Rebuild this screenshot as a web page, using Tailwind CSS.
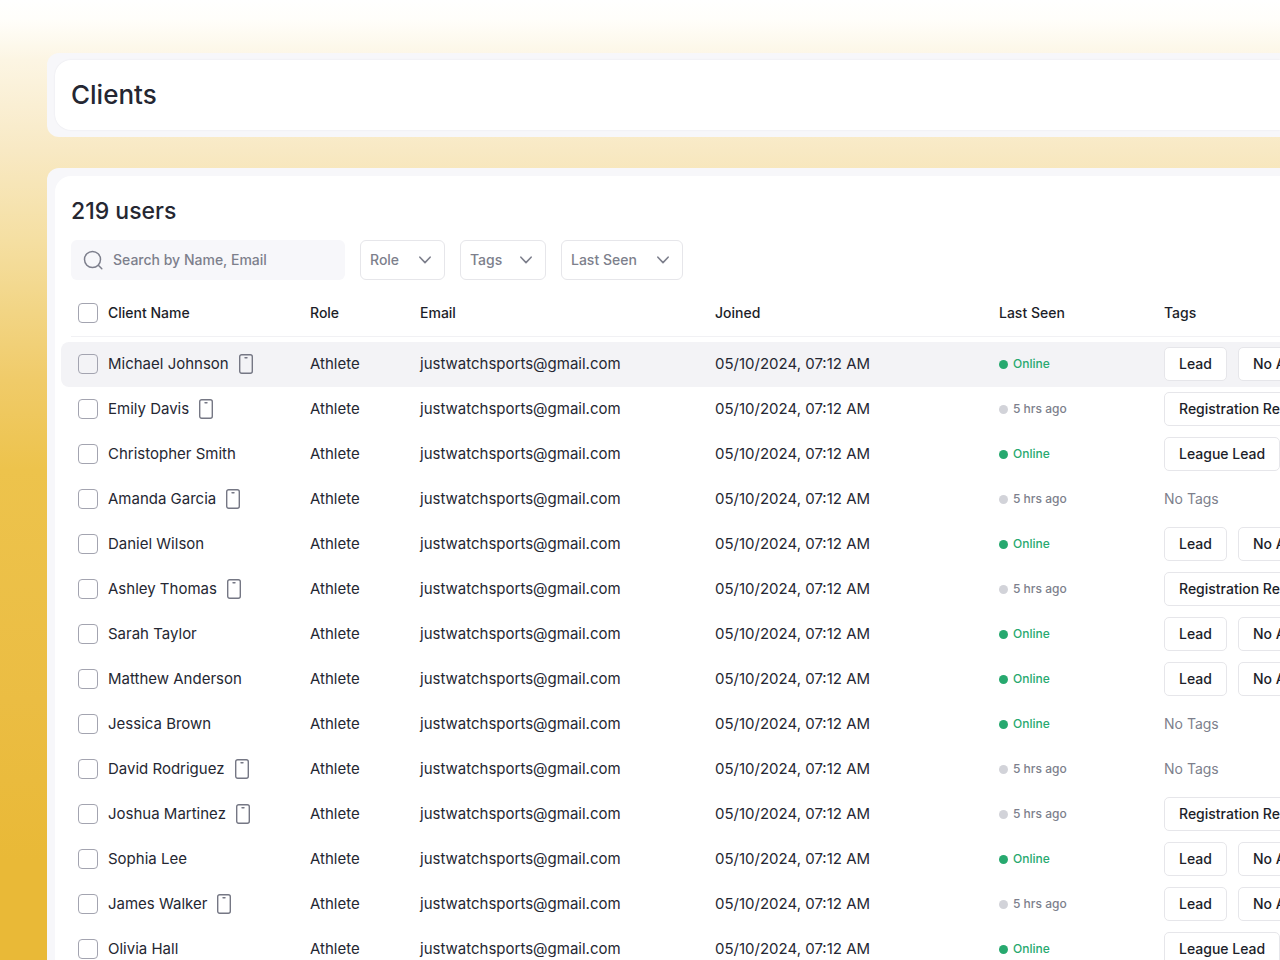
<!DOCTYPE html>
<html lang="en">
<head>
    <meta charset="UTF-8">
    <meta name="viewport" content="width=device-width, initial-scale=1.0">
    <title>Clients</title>
    <script src="https://cdn.jsdelivr.net/npm/@tailwindcss/browser@4"></script>
</head>
<body class="min-h-screen overflow-x-hidden bg-[#e9b937] bg-linear-[180deg,#ffffff_0px,#fffefa_20px,#fcf5e3_60px,#f8e9c4_150px,#f5dfa2_240px,#f2d585_310px,#f0cb69_380px,#edc34c_470px,#ebbd43_700px,#e9b937_860px] font-['Inter',sans-serif] text-[15px] leading-6 text-[#252732]">
    <div class="flex h-screen flex-col gap-[31px] overflow-hidden pt-[53px] pl-[47px]">
        <header class="shrink-0 rounded-l-xl bg-[#f7f7fa] py-[7px] pl-2">
            <div class="rounded-l-2xl bg-white px-4 py-[17px] shadow-[0_0_2px_rgba(30,30,60,0.08)]">
                <h1 class="text-[26px] leading-9 font-medium">Clients</h1>
            </div>
        </header>

        <main class="grow rounded-tl-xl bg-[#f7f7fa] pt-2 pl-2">
            <div class="rounded-tl-2xl bg-white pt-[19px] pl-1.5">
                <h2 class="pl-2.5 text-[23px] leading-8 font-medium">219 users</h2>

                <form class="mt-[13px] flex gap-[15px] pl-2.5 font-medium text-[#7d7f8c]">
                    <label class="flex h-10 w-[274px] items-center gap-2.5 rounded-md bg-[#f7f7fa] pl-3">
                        <svg class="size-5 shrink-0" viewBox="0 0 20 20" fill="none" stroke="currentColor" stroke-width="1.5" stroke-linecap="round"><circle cx="9.5" cy="9.5" r="8"/><path d="M15.3 15.3 18.8 18.8"/></svg>
                        <input type="search" aria-label="Search clients" placeholder="Search by Name, Email" class="w-full bg-transparent text-[14px] font-medium outline-none placeholder:text-[#7d7f8c]">
                    </label>
                    <div class="grid w-[85px] items-center">
                        <select aria-label="Role" class="col-start-1 row-start-1 h-10 w-full appearance-none rounded-md border border-[#e6e6ea] bg-white pl-[9px] text-[14px]">
                            <option>Role</option>
                        </select>
                        <svg class="pointer-events-none col-start-1 row-start-1 mr-[14px] h-2 w-3 justify-self-end" viewBox="0 0 12 8" fill="none" stroke="currentColor" stroke-width="1.6" stroke-linecap="round" stroke-linejoin="round"><path d="M.9 1.2 6 6.6l5.1-5.4"/></svg>
                    </div>
                    <div class="grid w-[86px] items-center">
                        <select aria-label="Tags" class="col-start-1 row-start-1 h-10 w-full appearance-none rounded-md border border-[#e6e6ea] bg-white pl-[9px] text-[14px]">
                            <option>Tags</option>
                        </select>
                        <svg class="pointer-events-none col-start-1 row-start-1 mr-[14px] h-2 w-3 justify-self-end" viewBox="0 0 12 8" fill="none" stroke="currentColor" stroke-width="1.6" stroke-linecap="round" stroke-linejoin="round"><path d="M.9 1.2 6 6.6l5.1-5.4"/></svg>
                    </div>
                    <div class="grid w-[122px] items-center">
                        <select aria-label="Last Seen" class="col-start-1 row-start-1 h-10 w-full appearance-none rounded-md border border-[#e6e6ea] bg-white pl-[9px] text-[14px]">
                            <option>Last Seen</option>
                        </select>
                        <svg class="pointer-events-none col-start-1 row-start-1 mr-[14px] h-2 w-3 justify-self-end" viewBox="0 0 12 8" fill="none" stroke="currentColor" stroke-width="1.6" stroke-linecap="round" stroke-linejoin="round"><path d="M.9 1.2 6 6.6l5.1-5.4"/></svg>
                    </div>
                </form>

                <table class="mt-2.5 w-full table-fixed border-separate border-spacing-0 text-left whitespace-nowrap">
                    <colgroup>
                        <col class="w-[249px]">
                        <col class="w-[110px]">
                        <col class="w-[295px]">
                        <col class="w-[284px]">
                        <col class="w-[165px]">
                        <col>
                    </colgroup>
                    <thead class="text-[14px] text-[#1c1e29]">
                        <tr>
                            <th class="p-0 pl-2.5">
                                <div class="flex h-[47px] items-center gap-2.5 border-b border-[#f1f1f4] pl-[7px] font-medium">
                                    <input type="checkbox" id="select-all" class="size-5 shrink-0 appearance-none rounded-sm border border-[#a3a4b0] bg-white">
                                    <label for="select-all">Client Name</label>
                                </div>
                            </th>
                            <th class="border-b border-[#f1f1f4] font-medium">Role</th>
                            <th class="border-b border-[#f1f1f4] font-medium">Email</th>
                            <th class="border-b border-[#f1f1f4] font-medium">Joined</th>
                            <th class="border-b border-[#f1f1f4] font-medium">Last Seen</th>
                            <th class="border-b border-[#f1f1f4] font-medium">Tags</th>
                        </tr>
                    </thead>
                    <tbody id="clients" class="before:block before:h-[5px] before:content-['']"></tbody>
                </table>
            </div>
        </main>
    </div>

    <script>
        const lead = ['Lead', 'No Assessment'];
        const registration = ['Registration Request'];
        const league = ['League Lead', 'No Assessment'];

        // name, has the mobile app, online, tags
        const clients = [
            ['Michael Johnson', true, true, lead],
            ['Emily Davis', true, false, registration],
            ['Christopher Smith', false, true, league],
            ['Amanda Garcia', true, false, []],
            ['Daniel Wilson', false, true, lead],
            ['Ashley Thomas', true, false, registration],
            ['Sarah Taylor', false, true, lead],
            ['Matthew Anderson', false, true, lead],
            ['Jessica Brown', false, true, []],
            ['David Rodriguez', true, false, []],
            ['Joshua Martinez', true, false, registration],
            ['Sophia Lee', false, true, lead],
            ['James Walker', true, false, lead],
            ['Olivia Hall', false, true, league],
        ];

        const phone = `<svg class="h-5 w-3.5 shrink-0" viewBox="0 0 14 20" fill="none" stroke="#757784" stroke-width="1.4" stroke-linecap="round"><rect x=".7" y=".7" width="12.6" height="18.6" rx="2"/><path d="M6 3.7h2"/></svg>`;

        function tagList(tags) {
            if (!tags.length) return '<span class="text-[14px] text-[#7d7f8c]">No Tags</span>';
            return '<div class="flex gap-[11px]">' + tags.map(tag =>
                `<span class="flex h-[34px] shrink-0 items-center rounded-[5px] border border-[#e6e6ea] bg-white px-[14px] text-[14px] font-medium text-[#1c1e29]">${tag}</span>`
            ).join('') + '</div>';
        }

        document.getElementById('clients').innerHTML = clients.map(([name, app, online, tags], i) => `
            <tr class="${i === 0 ? 'bg-[#f3f3f6]' : ''}">
                <td class="h-[45px] rounded-l-lg p-0 pb-px pl-[17px]">
                    <div class="flex h-6 items-center gap-2.5">
                        <input type="checkbox" id="client-${i}" class="size-5 shrink-0 appearance-none rounded-sm border border-[#a3a4b0]">
                        <label for="client-${i}">${name}</label>
                        ${app ? phone : ''}
                    </div>
                </td>
                <td class="p-0 pb-px">Athlete</td>
                <td class="p-0 pb-px">justwatchsports@gmail.com</td>
                <td class="p-0 pb-px">05/10/2024, 07:12 AM</td>
                <td class="p-0 pb-px">
                    <div class="flex items-center gap-[5px] text-[12px] font-medium ${online ? 'text-[#27a96f]' : 'text-[#7d7f8c]'}">
                        <span class="size-[9px] rounded-full ${online ? 'bg-[#27a96f]' : 'bg-[#d2d3d9]'}"></span>
                        ${online ? 'Online' : '5 hrs ago'}
                    </div>
                </td>
                <td class="overflow-hidden p-0 pb-px">${tagList(tags)}</td>
            </tr>`).join('');
    </script>
</body>
</html>
